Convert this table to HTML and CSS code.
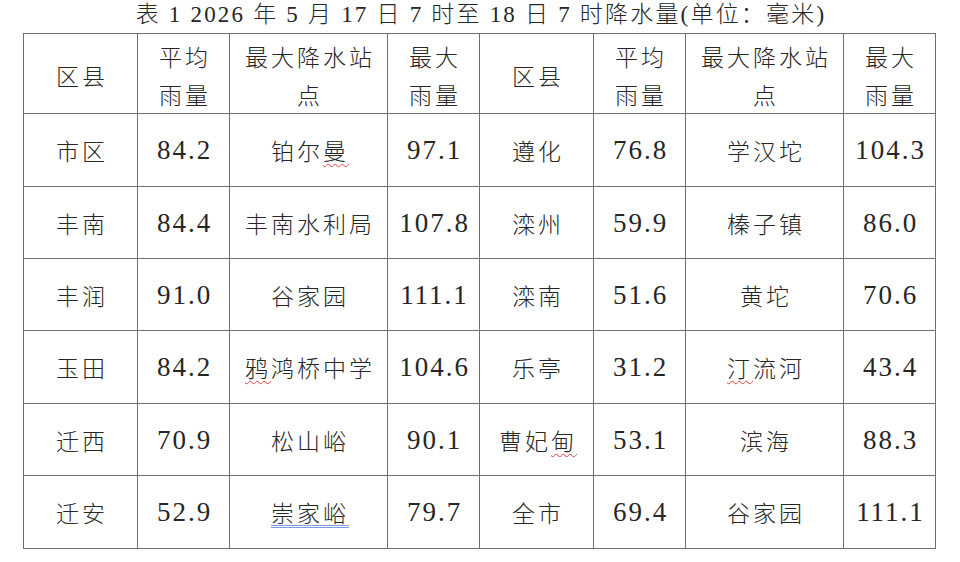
FILE: index.html
```html
<!DOCTYPE html>
<html lang="zh-CN">
<head>
<meta charset="utf-8">
<title>降水量</title>
<link rel="stylesheet" href="styles.css">
</head>
<body>
<div class="page">
  <div class="title">表 1 2026 年 5 月 17 日 7 时至 18 日 7 时降水量(单位：毫米)</div>
  <table class="rain">
    <colgroup>
      <col class="c-area"><col class="c-avg"><col class="c-st"><col class="c-max">
      <col class="c-area"><col class="c-avg"><col class="c-st"><col class="c-max">
    </colgroup>
    <tr class="head">
      <td>区县</td><td>平均<br>雨量</td><td>最大降水站<br>点</td><td>最大<br>雨量</td>
      <td>区县</td><td>平均<br>雨量</td><td>最大降水站<br>点</td><td>最大<br>雨量</td>
    </tr>
    <tr class="r73">
      <td>市区</td><td class="num">84.2</td><td>铂尔<span class="wavy">曼</span></td><td class="num">97.1</td>
      <td>遵化</td><td class="num">76.8</td><td>学汉坨</td><td class="num">104.3</td>
    </tr>
    <tr class="r72">
      <td>丰南</td><td class="num">84.4</td><td>丰南水利局</td><td class="num">107.8</td>
      <td>滦州</td><td class="num">59.9</td><td>榛子镇</td><td class="num">86.0</td>
    </tr>
    <tr class="r72">
      <td>丰润</td><td class="num">91.0</td><td>谷家园</td><td class="num">111.1</td>
      <td>滦南</td><td class="num">51.6</td><td>黄坨</td><td class="num">70.6</td>
    </tr>
    <tr class="r73">
      <td>玉田</td><td class="num">84.2</td><td><span class="wavy">鸦</span>鸿桥中学</td><td class="num">104.6</td>
      <td>乐亭</td><td class="num">31.2</td><td><span class="wavy">汀</span>流河</td><td class="num">43.4</td>
    </tr>
    <tr class="r72">
      <td>迁西</td><td class="num">70.9</td><td>松山峪</td><td class="num">90.1</td>
      <td>曹妃<span class="wavy">甸</span></td><td class="num">53.1</td><td>滨海</td><td class="num">88.3</td>
    </tr>
    <tr class="r73">
      <td>迁安</td><td class="num">52.9</td><td><span class="dbl">崇家峪</span></td><td class="num">79.7</td>
      <td>全市</td><td class="num">69.4</td><td>谷家园</td><td class="num">111.1</td>
    </tr>
  </table>
</div>
</body>
</html>
```
FILE: styles.css
```css
html, body {
  margin: 0;
  padding: 0;
  background: #ffffff;
}
.page {
  width: 960px;
  height: 562px;
  overflow: hidden;
  color: #262626;
  font-family: "Liberation Serif", "Noto Sans CJK SC", serif;
}
.title {
  height: 30px;
  line-height: 30px;
  font-size: 23px;
  text-align: center;
  letter-spacing: 2.2px;
  padding-left: 2px;
  margin-bottom: 3px;
  font-weight: 300;
}
.rain {
  margin-left: 23px;
  border-collapse: collapse;
  table-layout: fixed;
  width: 911px;
}
.c-area { width: 114px; }
.c-avg { width: 92px; }
.c-st { width: 158px; }
.c-max { width: 92px; }
.rain td {
  border: 1px solid #707070;
  padding: 0 0 0 3px;
  text-align: center;
  vertical-align: middle;
  font-size: 23px;
  letter-spacing: 3px;
  line-height: 38px;
  font-family: "Noto Sans CJK SC", "Liberation Serif", sans-serif;
  font-weight: 300;
}
.rain td.num {
  font-family: "Liberation Serif", "Noto Sans CJK SC", serif;
  font-size: 27px;
  font-weight: 400;
  letter-spacing: 2px;
  padding-left: 2px;
}
.head { height: 80px; }
.head td { line-height: 38px; padding-top: 2px; }
.r73 { height: 73px; }
.r72 { height: 72px; }
.wavy {
  text-decoration: underline wavy #e04040;
  text-decoration-thickness: 1px;
  text-underline-offset: 3px;
  text-decoration-skip-ink: none;
}
.dbl {
  text-decoration: underline double #7d9be0;
  text-decoration-thickness: 1px;
  text-underline-offset: 3px;
  text-decoration-skip-ink: none;
}
```
